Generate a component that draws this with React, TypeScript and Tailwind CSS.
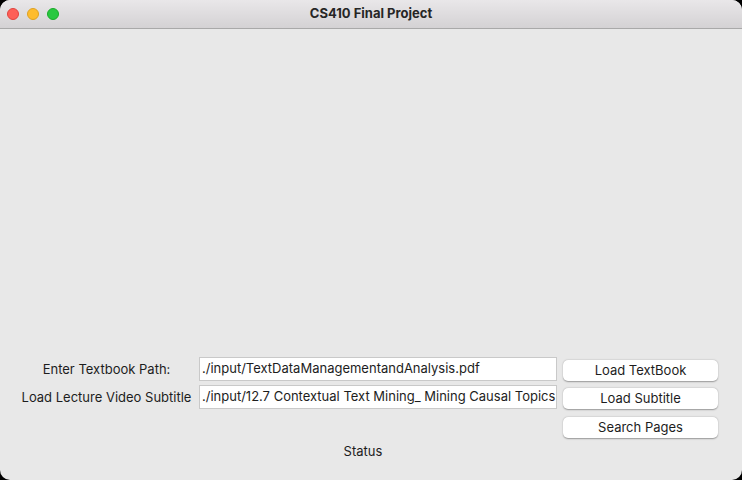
export default function App() {
  const font = { fontFamily: 'Inter, "Noto Sans", sans-serif' };
  return (
    <div className="w-[742px] h-[480px] bg-black" style={font}>
      <div className="w-full h-full flex flex-col rounded-[10px] overflow-hidden bg-[#e8e8e8]">
        {/* title bar */}
        <div className="h-[29px] shrink-0 relative flex items-center justify-center bg-gradient-to-b from-[#e9e7e9] to-[#d4d2d4] border-b border-[#a9a9a9]">
          <div className="absolute left-[7px] top-[8px] flex gap-[8px]">
            <span className="w-[12px] h-[12px] rounded-full bg-[#fe5f57] border border-[#e0443e]" />
            <span className="w-[12px] h-[12px] rounded-full bg-[#febc2e] border border-[#dea123]" />
            <span className="w-[12px] h-[12px] rounded-full bg-[#28c840] border border-[#1aab29]" />
          </div>
          <span className="text-[13px] font-bold text-[#262626]">CS410 Final Project</span>
        </div>

        {/* content */}
        <div className="flex-1 flex flex-col justify-end pb-[17px] text-[13px] text-[#1d1d1d]">
          <div className="grid grid-cols-[185px_364px_155px] pl-[14px] auto-rows-[28px]">
            <div className="flex items-center justify-center pt-[1px]">Enter Textbook Path:</div>
            <div className="flex items-center">
              <div className="w-[358px] h-[24px] bg-white border border-[#c9c9c9] flex items-center pl-[2px] whitespace-nowrap overflow-hidden">
                ./input/TextDataManagementandAnalysis.pdf
              </div>
            </div>
            <div className="pt-[5px]">
              <button className="w-full h-[21px] bg-white rounded-[5px] shadow-[0_0.5px_1.5px_rgba(0,0,0,0.35)] text-[13px]">
                Load TextBook
              </button>
            </div>

            <div className="flex items-center justify-center whitespace-nowrap pt-[1px]">Load Lecture Video Subtitle</div>
            <div className="flex items-center">
              <div className="w-[358px] h-[24px] bg-white border border-[#c9c9c9] flex items-center pl-[2px] whitespace-nowrap overflow-hidden">
                ./input/12.7 Contextual Text Mining_ Mining Causal Topics
              </div>
            </div>
            <div className="pt-[5px]">
              <button className="w-full h-[21px] bg-white rounded-[5px] shadow-[0_0.5px_1.5px_rgba(0,0,0,0.35)] text-[13px]">
                Load Subtitle
              </button>
            </div>

            <div />
            <div />
            <div className="pt-[6px]">
              <button className="w-full h-[21px] bg-white rounded-[5px] shadow-[0_0.5px_1.5px_rgba(0,0,0,0.35)] text-[13px]">
                Search Pages
              </button>
            </div>
          </div>
          <div className="h-[24px] flex items-center justify-center pr-[16px] pt-[1px]">Status</div>
        </div>
      </div>
    </div>
  );
}
